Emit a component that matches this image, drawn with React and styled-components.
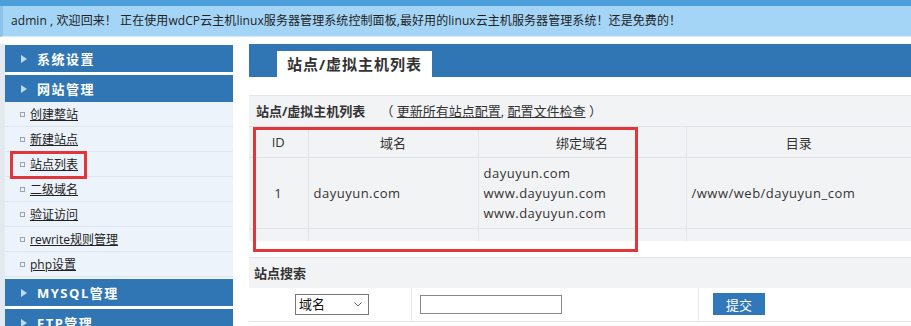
import React from 'react';
import styled, { createGlobalStyle } from 'styled-components';

const GlobalStyle = createGlobalStyle`
  html, body { margin: 0; padding: 0; background: #fff; }
  body { font-family: "Open Sans", "Noto Sans CJK SC", sans-serif; color: #333; }
  * { box-sizing: border-box; }
`;

const BLUE = '#3176b4';

const Page = styled.div`
  width: 911px;
  height: 326px;
  overflow: hidden;
  background: #fff;
`;

const TopStrip = styled.div`
  height: 6px;
  background: #4d9fdb;
`;

const Welcome = styled.div`
  height: 31px;
  background: #a4d5f7;
  border-left: 3px solid #8cc3ea;
  border-bottom: 1px solid #d6ecfb;
  padding-left: 8px;
  font-size: 12px;
  letter-spacing: 0.08px;
  line-height: 30px;
  color: #222;
  white-space: nowrap;
`;

const Body = styled.div`
  display: flex;
  align-items: flex-start;
  margin-top: 7px;
  border-left: 5px solid #e3e9ef;
  min-height: 290px;
`;

const Sidebar = styled.nav`
  width: 228px;
  flex: none;
  padding-top: 1px;
  background: #fff;
`;

const NavHeader = styled.div`
  height: 27px;
  margin-top: ${p => p.$gap || 0}px;
  background: ${BLUE};
  display: flex;
  align-items: center;
  color: #fff;
  font-size: 13px;
  font-weight: bold;
  letter-spacing: 1.5px;
`;

const Caret = styled.span`
  width: 0;
  height: 0;
  margin-left: 16px;
  margin-right: 10px;
  border-left: 6px solid #bcd9f2;
  border-top: 4.5px solid transparent;
  border-bottom: 4.5px solid transparent;
`;

const NavList = styled.div`
  background: #edf3fb;
  padding-bottom: 2px;
`;

const NavItem = styled.div`
  position: relative;
  height: 25px;
  border-bottom: 1px solid #dde6f0;
  display: flex;
  align-items: center;
  padding-left: 15px;
`;

const Bullet = styled.span`
  width: 5px;
  height: 5px;
  border: 1px solid #98a4b0;
  margin-right: 5px;
  margin-top: 1px;
`;

const NavLink = styled.a`
  font-size: 12px;
  color: #222;
  text-decoration: underline;
`;

const Highlight = styled.span`
  position: absolute;
  left: ${p => p.$left}px;
  top: ${p => p.$top}px;
  width: ${p => p.$w}px;
  height: ${p => p.$h}px;
  border: 3px solid #e2363b;
  pointer-events: none;
`;

const Main = styled.main`
  flex: 1;
  margin-left: 16px;
`;

const TabBar = styled.div`
  height: 33px;
  background: ${BLUE};
  display: flex;
  align-items: flex-end;
  padding-left: 28px;
`;

const Tab = styled.div`
  width: 155px;
  height: 26px;
  background: #fff;
  text-align: center;
  line-height: 26px;
  font-size: 15px;
  font-weight: bold;
  letter-spacing: 1px;
  color: #333;
`;

const Panel = styled.section`
  position: relative;
  margin-top: ${p => p.$mt}px;
  background: #f2f3f5;
  border-top: 1px solid #e3e5e8;
`;

const PanelTitle = styled.div`
  height: 30px;
  line-height: 30px;
  padding-left: ${p => p.$pl}px;
  font-size: 13px;
  color: #333;
  white-space: nowrap;
`;

const Strong = styled.b`
  font-weight: bold;
`;

const Links = styled.span`
  margin-left: 15px;
`;

const TextLink = styled.a`
  color: #333;
  text-decoration: underline;
`;

const Table = styled.table`
  width: 100%;
  border-collapse: collapse;
  table-layout: fixed;
  font-size: 13px;
  color: #333;
`;

const Row = styled.tr`
  height: ${p => p.$h}px;
  border-top: 1px solid #dfe2e6;
`;

const HeadCell = styled.th`
  font-weight: normal;
  text-align: center;
  border-left: 1px solid #e2e5e8;
  padding: 0;
  &:first-child { border-left: none; }
`;

const Cell = styled.td`
  text-align: ${p => (p.$center ? 'center' : 'left')};
  padding: ${p => (p.$center ? '0' : '0 0 0 5px')};
  border-left: 1px solid #e2e5e8;
  vertical-align: middle;
  letter-spacing: 0.5px;
  line-height: 20px;
  &:first-child { border-left: none; }
`;

const SearchRow = styled.div`
  display: grid;
  grid-template-columns: 162px 287px 1fr;
  height: 34px;
  background: #fff;
  border-bottom: 1px solid #e3e5e8;
`;

const SearchCell = styled.div`
  display: flex;
  align-items: center;
  justify-content: ${p => p.$justify || 'flex-start'};
  padding-left: ${p => p.$pl || 0}px;
  border-left: ${p => (p.$divider ? '1px solid #e6e8eb' : 'none')};
`;

const SelectBox = styled.div`
  position: relative;
  width: 74px;
  height: 21px;
  border: 1px solid #777;
  background: #fff;
  font-size: 13px;
  line-height: 19px;
  padding-left: 3px;
  color: #111;
  margin-left: 4px;
`;

const Chevron = styled.svg`
  position: absolute;
  right: 6px;
  top: 7px;
`;

const TextInput = styled.input`
  width: 142px;
  height: 19px;
  border: 1px solid #8a8a8a;
  padding: 0 2px;
  background: #fff;
`;

const SubmitButton = styled.button`
  width: 52px;
  height: 22px;
  border: none;
  background: #3078b9;
  color: #fff;
  font-family: inherit;
  font-size: 13px;
  padding: 0;
`;

const menuItems = ['创建整站', '新建站点', '站点列表', '二级域名', '验证访问', 'rewrite规则管理', 'php设置'];

export default function App() {
  return (
    <Page>
      <GlobalStyle />
      <TopStrip />
      <Welcome>admin , 欢迎回来！ 正在使用wdCP云主机linux服务器管理系统控制面板,最好用的linux云主机服务器管理系统！还是免费的！</Welcome>
      <Body>
        <Sidebar>
          <NavHeader><Caret />系统设置</NavHeader>
          <NavHeader $gap={3}><Caret />网站管理</NavHeader>
          <NavList>
            {menuItems.map(item => (
              <NavItem key={item}>
                <Bullet />
                <NavLink>{item}</NavLink>
                {item === '站点列表' && <Highlight $left={5} $top={-1} $w={77} $h={28} />}
              </NavItem>
            ))}
          </NavList>
          <NavHeader><Caret />MYSQL管理</NavHeader>
          <NavHeader $gap={3}><Caret />FTP管理</NavHeader>
        </Sidebar>
        <Main>
          <TabBar>
            <Tab>站点/虚拟主机列表</Tab>
          </TabBar>
          <Panel $mt={18}>
            <PanelTitle $pl={7}>
              <Strong>站点/虚拟主机列表</Strong>
              <Links>（ <TextLink>更新所有站点配置</TextLink>, <TextLink>配置文件检查</TextLink> ）</Links>
            </PanelTitle>
            <Table>
              <colgroup>
                <col style={{ width: 59 }} />
                <col style={{ width: 170 }} />
                <col style={{ width: 208 }} />
                <col />
              </colgroup>
              <thead>
                <Row $h={31}>
                  <HeadCell>ID</HeadCell>
                  <HeadCell>域名</HeadCell>
                  <HeadCell>绑定域名</HeadCell>
                  <HeadCell>目录</HeadCell>
                </Row>
              </thead>
              <tbody>
                <Row $h={71}>
                  <Cell $center>1</Cell>
                  <Cell>dayuyun.com</Cell>
                  <Cell>dayuyun.com<br />www.dayuyun.com<br />www.dayuyun.com</Cell>
                  <Cell>/www/web/dayuyun_com</Cell>
                </Row>
                <Row $h={12}>
                  <Cell $center />
                  <Cell />
                  <Cell />
                  <Cell />
                </Row>
              </tbody>
            </Table>
            <Highlight $left={4} $top={31} $w={385} $h={125} />
          </Panel>
          <Panel $mt={16}>
            <PanelTitle $pl={5}><Strong>站点搜索</Strong></PanelTitle>
            <SearchRow>
              <SearchCell $justify="center">
                <SelectBox>
                  域名
                  <Chevron width="8" height="5" viewBox="0 0 8 5">
                    <path d="M0.5 0.5 L4 4 L7.5 0.5" fill="none" stroke="#666" strokeWidth="1" />
                  </Chevron>
                </SelectBox>
              </SearchCell>
              <SearchCell $divider $pl={8}>
                <TextInput type="text" />
              </SearchCell>
              <SearchCell $divider $pl={14}>
                <SubmitButton>提交</SubmitButton>
              </SearchCell>
            </SearchRow>
          </Panel>
        </Main>
      </Body>
    </Page>
  );
}
